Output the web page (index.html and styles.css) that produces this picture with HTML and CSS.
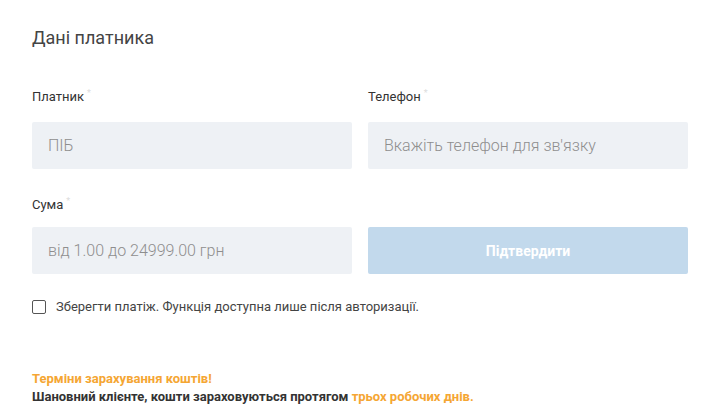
FILE: index.html
```html
<!DOCTYPE html>
<html lang="uk">
<head>
<meta charset="utf-8">
<link rel="stylesheet" href="styles.css">
</head>
<body>
<div class="page">
  <h2 class="title">Дані платника</h2>
  <div class="grid">
    <div class="field">
      <label class="label">Платник<span class="req">*</span></label>
      <div class="input placeholder">ПІБ</div>
    </div>
    <div class="field">
      <label class="label">Телефон<span class="req">*</span></label>
      <div class="input placeholder">Вкажіть телефон для зв'язку</div>
    </div>
    <div class="field row2">
      <label class="label">Сума<span class="req">*</span></label>
      <div class="input placeholder">від 1.00 до 24999.00 грн</div>
    </div>
    <div class="field row2 field-btn">
      <button class="btn">Підтвердити</button>
    </div>
  </div>
  <div class="check">
    <span class="box"></span>
    <span class="check-text">Зберегти платіж. Функція доступна лише після авторизації.</span>
  </div>
  <div class="note">
    <div class="note-title">Терміни зарахування коштів!</div>
    <div class="note-text">Шановний клієнте, кошти зараховуються протягом <span class="accent">трьох робочих днів.</span></div>
  </div>
</div>
</body>
</html>
```
FILE: styles.css
```css
* { box-sizing: border-box; }
html, body { margin: 0; padding: 0; background: #fff; }
body { font-family: Roboto, "Noto Sans", Arial, sans-serif; color: #333; }
.page { padding: 26px 28px 0 32px; width: 716px; }
.title { margin: 0; font-size: 18px; font-weight: 400; color: #444; line-height: 24px; }
.grid { display: grid; grid-template-columns: 320px 320px; column-gap: 16px; margin-top: 38px; }
.field { display: flex; flex-direction: column; }
.label { font-size: 13px; line-height: 18px; color: #333; height: 18px; margin-bottom: 16px; }
.req { color: #ddd; font-size: 9px; vertical-align: top; margin-left: 3px; position: relative; top: -4px; }
.input { height: 47px; background: #eef1f5; border-radius: 2px; padding: 0 16px; display: flex; align-items: center; font-size: 16px; font-weight: 300; }
.placeholder { color: #8e8e8e; }
.row2 { margin-top: 27px; }
.row2 .label { margin-bottom: 13px; }
.field-btn { justify-content: flex-end; }
.btn { height: 47px; width: 100%; border: 0; border-radius: 2px; background: #c2d9ec; color: #fff; font-family: inherit; font-size: 14px; font-weight: 700; }
.check { display: flex; align-items: center; margin-top: 25px; gap: 10px; }
.box { width: 14px; height: 14px; border: 1px solid #555; border-radius: 2px; flex: none; }
.check-text { font-size: 13px; color: #444; line-height: 16px; }
.note { margin-top: 55px; font-size: 13px; font-weight: 700; line-height: 18px; }
.note-title { color: #f5a633; }
.note-text { color: #333; }
.accent { color: #f5a633; }
```
